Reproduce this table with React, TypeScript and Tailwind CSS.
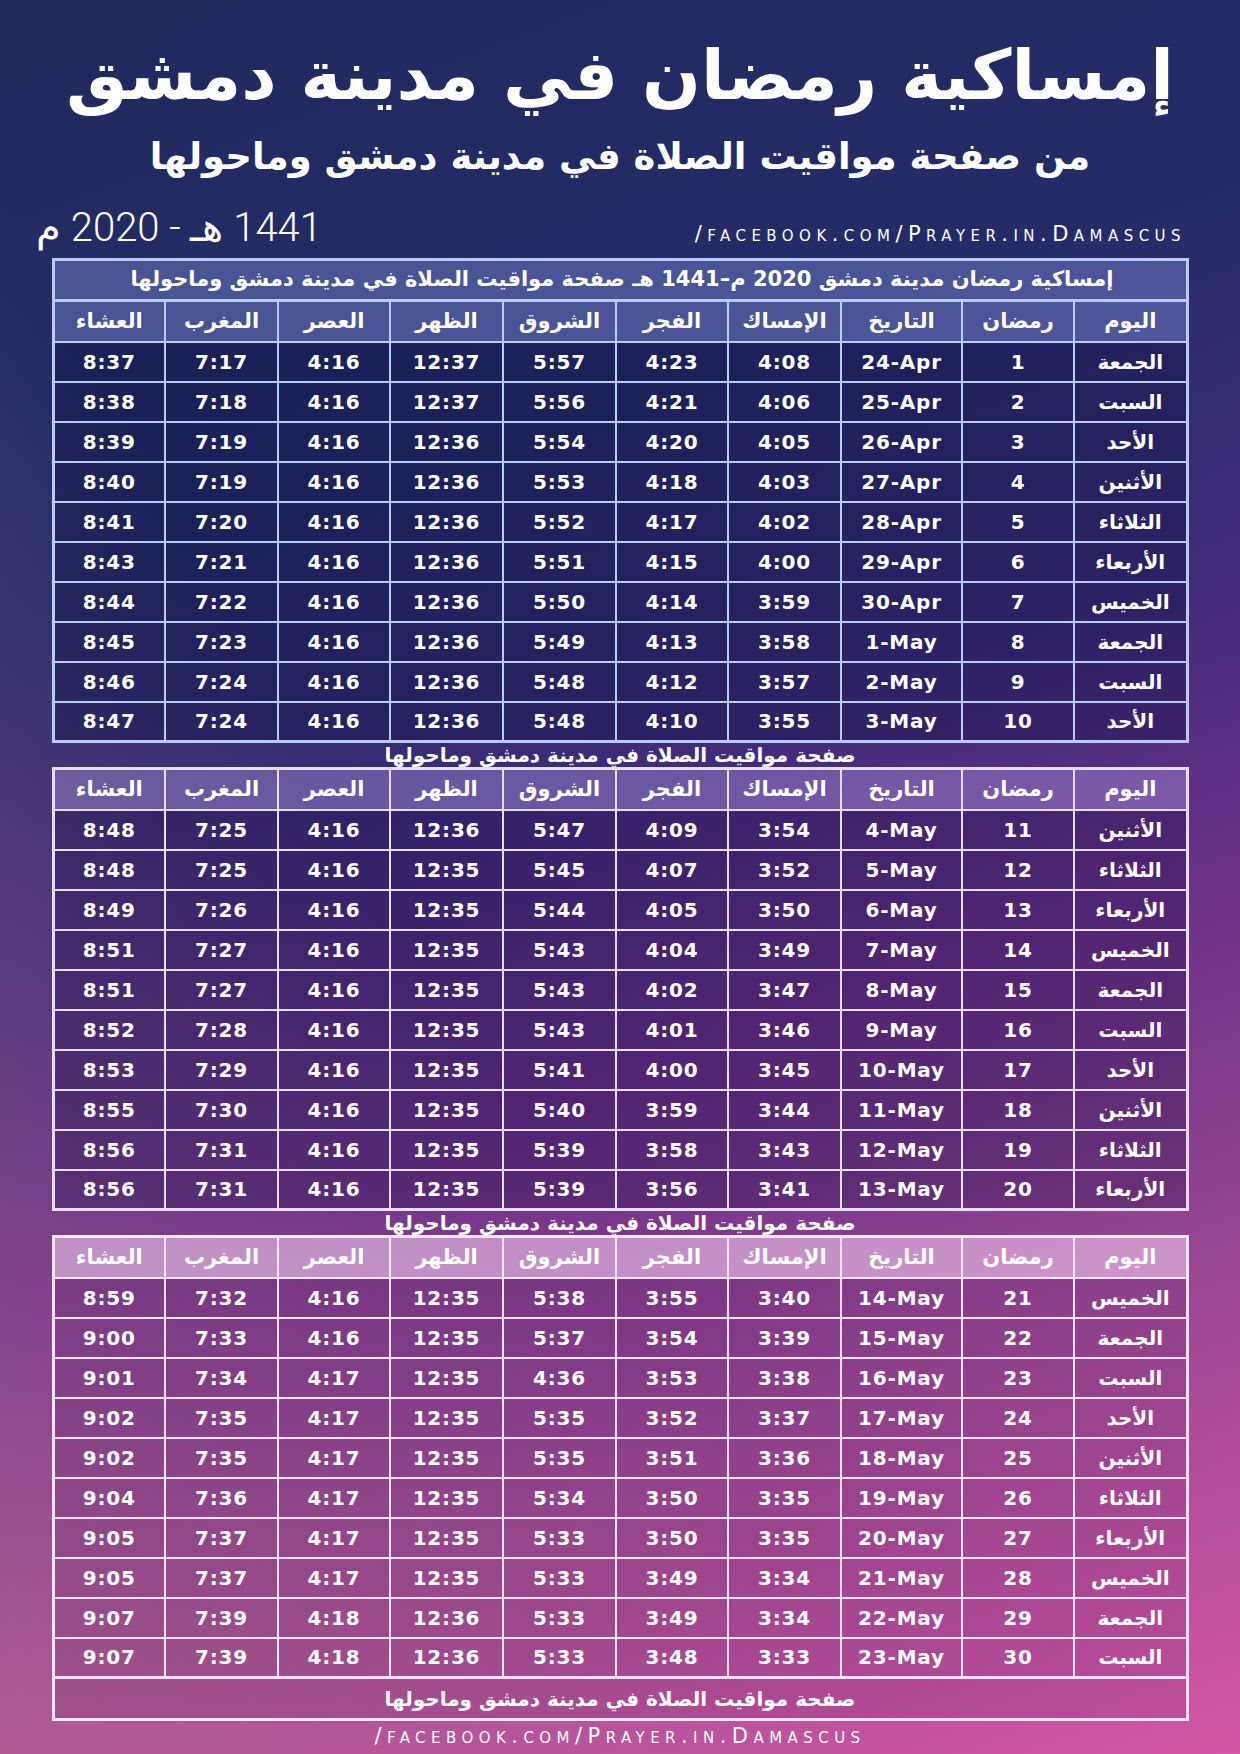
import React from "react";

type Row = [string, string, string, string, string, string, string, string, string, string];

const heads = ["اليوم", "رمضان", "التاريخ", "الإمساك", "الفجر", "الشروق", "الظهر", "العصر", "المغرب", "العشاء"];
const colWidths = [113, 112, 121, 113, 112, 113, 113, 112, 113, 112];

const part1: Row[] = [
  ["الجمعة", "1", "24-Apr", "4:08", "4:23", "5:57", "12:37", "4:16", "7:17", "8:37"],
  ["السبت", "2", "25-Apr", "4:06", "4:21", "5:56", "12:37", "4:16", "7:18", "8:38"],
  ["الأحد", "3", "26-Apr", "4:05", "4:20", "5:54", "12:36", "4:16", "7:19", "8:39"],
  ["الأثنين", "4", "27-Apr", "4:03", "4:18", "5:53", "12:36", "4:16", "7:19", "8:40"],
  ["الثلاثاء", "5", "28-Apr", "4:02", "4:17", "5:52", "12:36", "4:16", "7:20", "8:41"],
  ["الأربعاء", "6", "29-Apr", "4:00", "4:15", "5:51", "12:36", "4:16", "7:21", "8:43"],
  ["الخميس", "7", "30-Apr", "3:59", "4:14", "5:50", "12:36", "4:16", "7:22", "8:44"],
  ["الجمعة", "8", "1-May", "3:58", "4:13", "5:49", "12:36", "4:16", "7:23", "8:45"],
  ["السبت", "9", "2-May", "3:57", "4:12", "5:48", "12:36", "4:16", "7:24", "8:46"],
  ["الأحد", "10", "3-May", "3:55", "4:10", "5:48", "12:36", "4:16", "7:24", "8:47"],
];

const part2: Row[] = [
  ["الأثنين", "11", "4-May", "3:54", "4:09", "5:47", "12:36", "4:16", "7:25", "8:48"],
  ["الثلاثاء", "12", "5-May", "3:52", "4:07", "5:45", "12:35", "4:16", "7:25", "8:48"],
  ["الأربعاء", "13", "6-May", "3:50", "4:05", "5:44", "12:35", "4:16", "7:26", "8:49"],
  ["الخميس", "14", "7-May", "3:49", "4:04", "5:43", "12:35", "4:16", "7:27", "8:51"],
  ["الجمعة", "15", "8-May", "3:47", "4:02", "5:43", "12:35", "4:16", "7:27", "8:51"],
  ["السبت", "16", "9-May", "3:46", "4:01", "5:43", "12:35", "4:16", "7:28", "8:52"],
  ["الأحد", "17", "10-May", "3:45", "4:00", "5:41", "12:35", "4:16", "7:29", "8:53"],
  ["الأثنين", "18", "11-May", "3:44", "3:59", "5:40", "12:35", "4:16", "7:30", "8:55"],
  ["الثلاثاء", "19", "12-May", "3:43", "3:58", "5:39", "12:35", "4:16", "7:31", "8:56"],
  ["الأربعاء", "20", "13-May", "3:41", "3:56", "5:39", "12:35", "4:16", "7:31", "8:56"],
];

const part3: Row[] = [
  ["الخميس", "21", "14-May", "3:40", "3:55", "5:38", "12:35", "4:16", "7:32", "8:59"],
  ["الجمعة", "22", "15-May", "3:39", "3:54", "5:37", "12:35", "4:16", "7:33", "9:00"],
  ["السبت", "23", "16-May", "3:38", "3:53", "4:36", "12:35", "4:17", "7:34", "9:01"],
  ["الأحد", "24", "17-May", "3:37", "3:52", "5:35", "12:35", "4:17", "7:35", "9:02"],
  ["الأثنين", "25", "18-May", "3:36", "3:51", "5:35", "12:35", "4:17", "7:35", "9:02"],
  ["الثلاثاء", "26", "19-May", "3:35", "3:50", "5:34", "12:35", "4:17", "7:36", "9:04"],
  ["الأربعاء", "27", "20-May", "3:35", "3:50", "5:33", "12:35", "4:17", "7:37", "9:05"],
  ["الخميس", "28", "21-May", "3:34", "3:49", "5:33", "12:35", "4:17", "7:37", "9:05"],
  ["الجمعة", "29", "22-May", "3:34", "3:49", "5:33", "12:36", "4:18", "7:39", "9:07"],
  ["السبت", "30", "23-May", "3:33", "3:48", "5:33", "12:36", "4:18", "7:39", "9:07"],
];

const PAGE_NAME = "صفحة مواقيت الصلاة في مدينة دمشق وماحولها";

type Theme = {
  line: string;
  cell: string;
  head: string;
};

const themes: Theme[] = [
  { line: "border-[#b7cdf6]", cell: "bg-[#0c0f40]/35", head: "bg-[#8fa2f0]/35" },
  { line: "border-[#e6defb]", cell: "bg-[#1a0c45]/30", head: "bg-[#b9a8f0]/35" },
  { line: "border-[#f8e6f6]", cell: "bg-[#3a0a40]/10", head: "bg-[#fad6f6]/55" },
];

const TimeTable = ({
  rows,
  theme,
  top,
  bottom,
}: {
  rows: Row[];
  theme: Theme;
  top?: string;
  bottom?: string;
}) => {
  return (
    <table className={`w-[1134px] table-fixed border-collapse border-[3px] ${theme.line}`}>
      <colgroup>
        {colWidths.map((w, i) => (
          <col key={i} style={{ width: w }} />
        ))}
      </colgroup>
      <thead>
        {top && (
          <tr className="h-[41px]">
            <td
              colSpan={10}
              className={`border-[3px] ${theme.line} ${theme.head} pl-[4px] text-center text-[21px] font-bold whitespace-nowrap`}
            >
              {top}
            </td>
          </tr>
        )}
        <tr className="h-[41px]">
          {heads.map((h) => (
            <th key={h} className={`border-2 ${theme.line} ${theme.head} text-center text-[21px] font-bold`}>
              {h}
            </th>
          ))}
        </tr>
      </thead>
      <tbody>
        {rows.map((r, ri) => (
          <tr key={ri} className="h-[40px]">
            {r.map((v, ci) => (
              <td
                key={ci}
                className={`border-2 ${theme.line} ${theme.cell} text-center font-bold ${
                  ci === 0 ? "text-[20px]" : "text-[20px] tracking-[0.04em]"
                }`}
              >
                {ci === 0 ? v : <span dir="ltr">{v}</span>}
              </td>
            ))}
          </tr>
        ))}
        {bottom && (
          <tr className="h-[42px]">
            <td colSpan={10} className={`border-[3px] ${theme.line} ${theme.cell} text-center text-[20px] font-bold`}>
              {bottom}
            </td>
          </tr>
        )}
      </tbody>
    </table>
  );
};

const Between = () => (
  <p className="flex h-[24px] items-center justify-center text-[20px] font-bold leading-none">{PAGE_NAME}</p>
);

const FbLink = ({ className }: { className?: string }) => (
  <p
    dir="ltr"
    className={`font-['DejaVu_Sans',sans-serif] text-[21px] font-medium leading-none tracking-[0.26em] [font-variant:small-caps] ${className ?? ""}`}
  >
    /facebook.com/Prayer.in.Damascus
  </p>
);

export default function App() {
  return (
    <div
      dir="rtl"
      className="relative h-[1754px] w-[1240px] overflow-hidden bg-[linear-gradient(160deg,#1f2a5e_0%,#252b68_28%,#3e2b79_45%,#6a3088_60%,#9a4792_78%,#d457a6_100%)] font-['DejaVu_Sans',sans-serif] text-white"
    >
      {/* muted pink haze rising from the bottom-left corner */}
      <div className="pointer-events-none absolute inset-0 bg-[linear-gradient(60deg,rgba(200,120,150,0.4)_0%,rgba(200,120,150,0)_40%)]" />

      <div className="relative flex flex-col items-center">
        {/* Titles */}
        <h1 className="mt-[27px] whitespace-nowrap text-[69px] font-bold leading-[96px]">إمساكية رمضان في مدينة دمشق</h1>
        <h2 className="mt-[8px] whitespace-nowrap text-[37px] font-bold leading-[52px]">
          من صفحة مواقيت الصلاة في مدينة دمشق وماحولها
        </h2>

        {/* Year + link */}
        <div className="flex h-[75px] w-full items-end justify-between pl-[36px] pr-[54px]">
          <FbLink className="mb-[13px]" />
          <p className="mb-[10px] font-['Roboto',sans-serif] text-[40px] font-light leading-none tracking-[0.03em]">
            1441 هـ - 2020 م
          </p>
        </div>

        {/* Tables */}
        <div className="flex flex-col items-center">
          <TimeTable
            rows={part1}
            theme={themes[0]}
            top="إمساكية رمضان مدينة دمشق 2020 م–1441 هـ صفحة مواقيت الصلاة في مدينة دمشق وماحولها"
          />
          <Between />
          <TimeTable rows={part2} theme={themes[1]} />
          <Between />
          <TimeTable rows={part3} theme={themes[2]} bottom={PAGE_NAME} />
        </div>

        <FbLink className="mt-[5px]" />
      </div>
    </div>
  );
}
